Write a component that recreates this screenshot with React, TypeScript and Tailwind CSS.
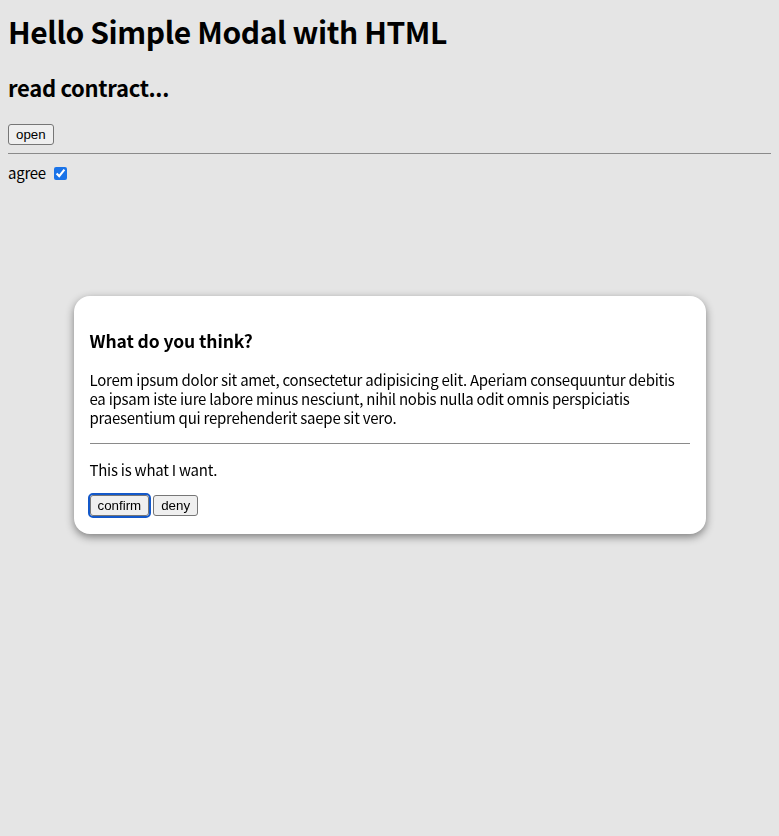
import { useState } from 'react';

const font = { fontFamily: '"Noto Sans CJK KR", "Noto Sans", sans-serif' };

const NativeButton = ({ label, focused }: { label: string; focused?: boolean }) => (
  <button
    className={`h-[21px] px-[7px] text-[13.33px] leading-none text-black bg-[#efefef] border border-[#767676] rounded-[3px] font-['Liberation_Sans',Arial,sans-serif] tracking-normal ${
      focused ? 'outline-2 outline-[#1358c9] outline-offset-0' : ''
    }`}
  >
    {label}
  </button>
);

export default function App() {
  const [agree, setAgree] = useState(true);

  return (
    <div
      className="min-h-[836px] bg-[#e5e5e5] text-black px-2 text-[15px] tracking-[-0.25px]"
      style={font}
    >
      <h1 className="pt-[11px] text-[30px] font-bold leading-[40px] tracking-[-0.4px]">
        Hello Simple Modal with HTML
      </h1>
      <h2 className="mt-[21px] text-[22px] font-bold leading-[30px] tracking-[-0.3px]">read contract...</h2>
      <div className="mt-[22px] flex">
        <NativeButton label="open" />
      </div>
      <hr className="mt-[8px] border-t border-[#8a8a8a]" />
      <label className="mt-[8px] flex items-center gap-2 h-[22px]">
        <span>agree</span>
        <input
          type="checkbox"
          checked={agree}
          onChange={(e) => setAgree(e.target.checked)}
          className="w-[13px] h-[13px] accent-[#1a73e8]"
        />
      </label>

      {/* dialog overlay */}
      <div className="fixed inset-0 flex items-center justify-center pb-[6px]">
        <div className="w-[632px] bg-white rounded-[16px] shadow-[0_3px_8px_rgba(0,0,0,0.45)] px-4 pt-[34px] pb-[18px]">
          <h3 className="text-[17.5px] font-bold leading-[22px] tracking-[-0.1px]">What do you think?</h3>
          <p className="mt-[18px] leading-[19px]">
            Lorem ipsum dolor sit amet, consectetur adipisicing elit. Aperiam consequuntur debitis
            <br />
            ea ipsam iste iure labore minus nesciunt, nihil nobis nulla odit omnis perspiciatis
            <br />
            praesentium qui reprehenderit saepe sit vero.
          </p>
          <hr className="mt-[16px] border-t border-[#8a8a8a]" />
          <p className="mt-[16px] leading-[19px]">This is what I want.</p>
          <div className="mt-[16px] flex gap-1">
            <NativeButton label="confirm" focused />
            <NativeButton label="deny" />
          </div>
        </div>
      </div>
    </div>
  );
}
